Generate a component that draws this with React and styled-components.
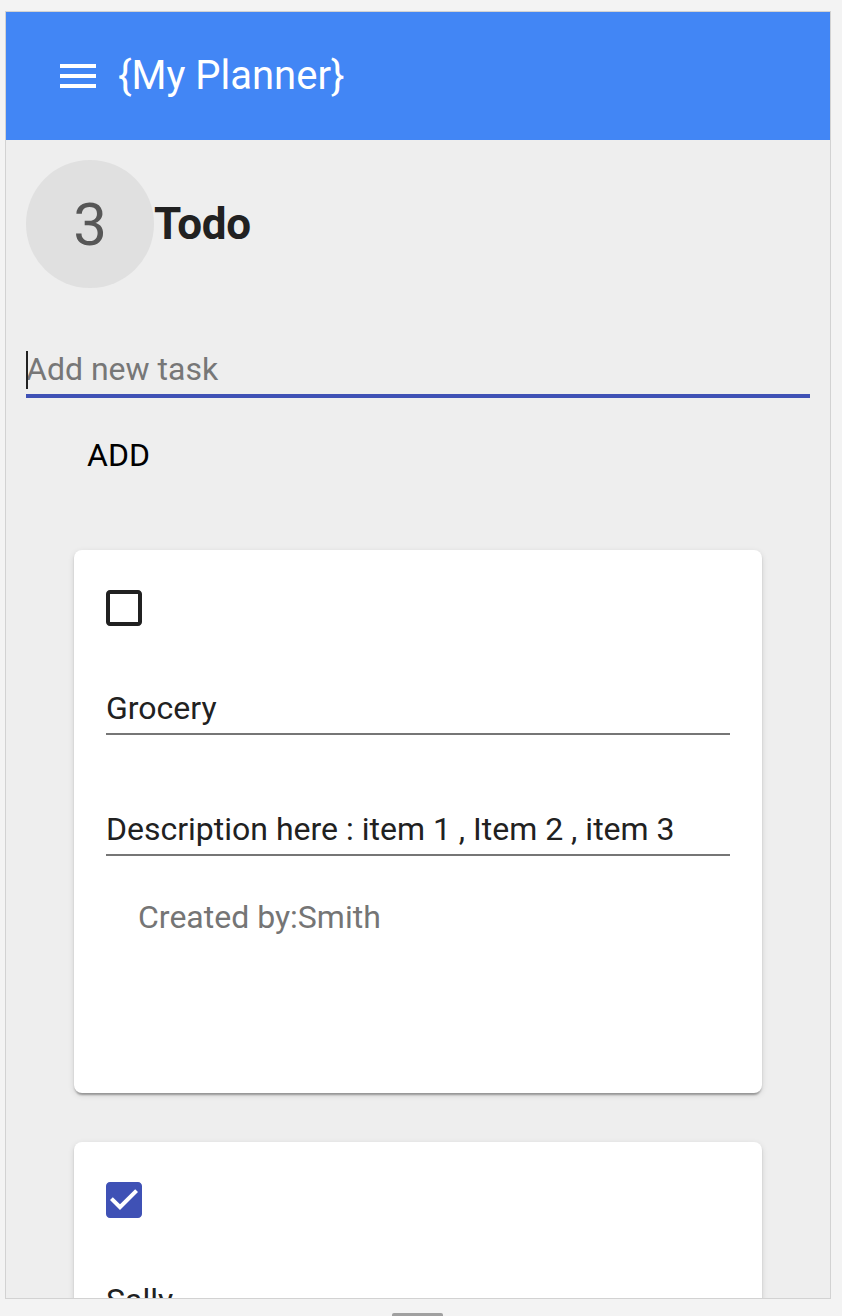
import React from 'react'
import styled, { createGlobalStyle } from 'styled-components'

const tasks = [
    { id: 1, title: 'Grocery', description: 'Description here : item 1 , Item 2 , item 3', author: 'Smith', done: false },
    { id: 2, title: 'Sally', description: 'Call Sally about the weekend', author: 'Smith', done: true },
]

function MenuIcon() {
    return (
        <svg width="48" height="48" viewBox="0 0 24 24" fill="#fff">
            <path d="M3 18h18v-2H3v2zm0-5h18v-2H3v2zm0-7v2h18V6H3z" />
        </svg>
    )
}

function CheckIcon({ checked }) {
    if (checked) {
        return (
            <svg width="48" height="48" viewBox="0 0 24 24" fill="#3f51b5">
                <path d="M19 3H5c-1.11 0-2 .9-2 2v14c0 1.1.89 2 2 2h14c1.1 0 2-.9 2-2V5c0-1.1-.9-2-2-2zm-9 14l-5-5 1.41-1.41L10 14.17l7.59-7.59L19 8l-9 9z" />
            </svg>
        )
    }
    return (
        <svg width="48" height="48" viewBox="0 0 24 24" fill="#212121">
            <path d="M19 5v14H5V5h14m0-2H5c-1.11 0-2 .9-2 2v14c0 1.1.89 2 2 2h14c1.1 0 2-.9 2-2V5c0-1.1-.9-2-2-2z" />
        </svg>
    )
}

function TaskCard({ task }) {
    return (
        <Card>
            <CheckboxWrap>
                <CheckIcon checked={task.done} />
            </CheckboxWrap>
            <Field defaultValue={task.title} />
            <Field defaultValue={task.description} spaced />
            <CreatedBy>Created by:{task.author}</CreatedBy>
        </Card>
    )
}

export default function App() {
    return (
        <>
            <GlobalStyle />
            <Frame>
                <AppBar>
                    <MenuIcon />
                    <Title>{'{My Planner}'}</Title>
                </AppBar>

                <Main>
                    <HeaderRow>
                        <Avatar>3</Avatar>
                        <Heading>Todo</Heading>
                    </HeaderRow>

                    <InputWrap>
                        <Caret />
                        <NewTaskInput placeholder="Add new task" />
                    </InputWrap>

                    <AddButton>Add</AddButton>

                    <CardList>
                        {tasks.map(task => (
                            <TaskCard key={task.id} task={task} />
                        ))}
                    </CardList>
                </Main>
            </Frame>
            <Handle />
        </>
    )
}

const GlobalStyle = createGlobalStyle`
body {
    margin: 0;
    background: #f3f3f3;
    font-family: Roboto, "Noto Sans", sans-serif;
}
`

const Frame = styled.div`
margin: 11px 0 0 5px;
width: 826px;
height: 1288px;
box-sizing: border-box;
border: 1px solid #d2d2d2;
background: #eeeeee;
overflow: hidden;
`

const AppBar = styled.header`
height: 128px;
background: #4286f5;
display: flex;
align-items: center;
padding-left: 48px;
gap: 16px;
`

const Title = styled.h1`
margin: 0;
color: #fff;
font-size: 40px;
font-weight: 400;
line-height: 48px;
`

const Main = styled.main`
padding: 20px 20px 0;
`

const HeaderRow = styled.div`
display: flex;
align-items: center;
`

const Avatar = styled.div`
width: 128px;
height: 128px;
border-radius: 50%;
background: #e0e0e0;
color: #575757;
font-size: 60px;
font-weight: 400;
display: flex;
align-items: center;
justify-content: center;
flex-shrink: 0;
`

const Heading = styled.h2`
margin: 0;
font-size: 44px;
font-weight: 700;
color: #212121;
letter-spacing: -0.3px;
`

const InputWrap = styled.div`
position: relative;
margin-top: 62px;
`

const Caret = styled.span`
position: absolute;
left: 0;
top: 1px;
width: 2px;
height: 38px;
background: #222;
`

const NewTaskInput = styled.input`
display: block;
width: 100%;
height: 48px;
box-sizing: border-box;
padding: 0 0 6px;
border: 0;
border-bottom: 4px solid #3f51b5;
background: transparent;
font-family: inherit;
font-size: 32px;
line-height: 38px;
color: #212121;
outline: none;

&::placeholder {
    color: #777;
}
`

const AddButton = styled.button`
display: block;
margin: 27px 0 0 29px;
padding: 10px 32px;
border: 0;
background: none;
font-family: inherit;
font-size: 32px;
line-height: 40px;
color: #000;
text-transform: uppercase;
cursor: pointer;
`

const CardList = styled.div`
display: flex;
flex-direction: column;
gap: 49px;
margin: 65px 48px 0;
`

const Card = styled.div`
background: #fff;
border-radius: 8px;
padding: 34px 32px 157px;
box-shadow: 0 4px 2px -2px rgba(0, 0, 0, 0.2), 0 2px 2px 0 rgba(0, 0, 0, 0.14), 0 2px 6px 0 rgba(0, 0, 0, 0.12);
`

const CheckboxWrap = styled.div`
width: 48px;
height: 48px;
margin-left: -6px;

svg {
    display: block;
}
`

const Field = styled.input`
display: block;
width: 100%;
height: 46px;
box-sizing: border-box;
margin-top: ${props => (props.spaced ? '75px' : '57px')};
padding: 0 0 6px;
border: 0;
border-bottom: 2px solid #767676;
background: transparent;
font-family: inherit;
font-size: 32px;
line-height: 38px;
color: #212121;
outline: none;
`

const CreatedBy = styled.p`
margin: 42px 0 0;
padding-left: 32px;
font-size: 32px;
line-height: 38px;
color: #757575;
`

const Handle = styled.div`
width: 51px;
height: 4px;
margin: 14px 0 0 392px;
background: #a0a0a0;
border-radius: 2px 2px 0 0;
`
